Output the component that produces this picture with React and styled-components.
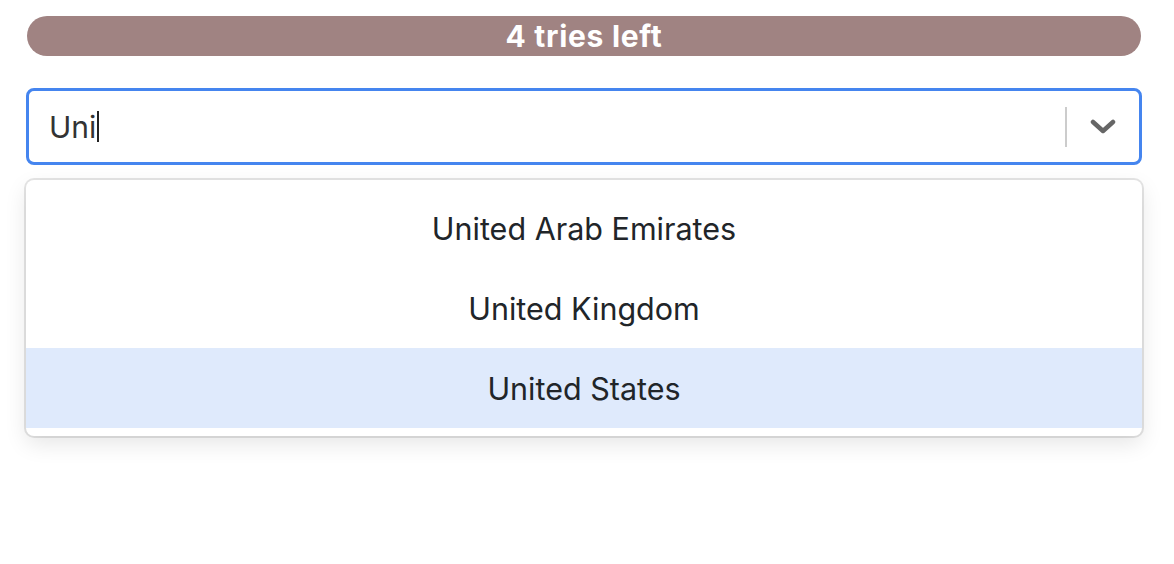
import React from "react";
import styled, { createGlobalStyle } from "styled-components";

const Global = createGlobalStyle`
  html, body { margin: 0; padding: 0; background: #fff; min-height: 100vh; }
  #root { min-height: 100vh; }
  body { font-family: Inter, "Noto Sans", "Liberation Sans", sans-serif; }
`;

const Page = styled.div`
  width: 1116px;
  margin-left: 26px;
  padding-top: 16px;
  display: flex;
  flex-direction: column;
`;

const TriesBar = styled.div`
  margin: 0 1px;
  height: 40px;
  border-radius: 20px;
  background: #a08382;
  color: #fff;
  font-weight: 700;
  font-size: 30px;
  display: flex;
  align-items: center;
  justify-content: center;
  letter-spacing: 0.7px;
`;

const SelectWrap = styled.div`
  margin-top: 32px;
  position: relative;
`;

const Control = styled.div`
  height: 77px;
  box-sizing: border-box;
  border: 3px solid #4585ef;
  border-radius: 8px;
  display: flex;
  align-items: center;
  background: #fff;
`;

const ValueArea = styled.div`
  flex: 1;
  padding-left: 20px;
  display: flex;
  align-items: center;
  font-size: 30px;
  color: #333;
`;

const Caret = styled.span`
  display: inline-block;
  width: 2px;
  height: 31px;
  background: #222;
  margin-left: 1px;
`;

const Indicators = styled.div`
  display: flex;
  align-items: center;
  align-self: stretch;
`;

const Separator = styled.span`
  width: 2px;
  height: 40px;
  background: #ccc;
`;

const Chevron = styled.div`
  width: 72px;
  display: flex;
  align-items: center;
  justify-content: center;
  color: #666;
`;

const Menu = styled.div`
  position: absolute;
  top: 92px;
  left: 0;
  right: 0;
  z-index: 2;
  background: #fff;
  border-radius: 8px;
  box-shadow: 0 0 0 2px rgba(0, 0, 0, 0.1), 0 8px 22px rgba(0, 0, 0, 0.1);
  padding: 8px 0;
`;

const OptionRow = styled.div`
  height: 80px;
  display: flex;
  align-items: center;
  justify-content: center;
  font-size: 30.5px;
  color: #212529;
  background: ${(p) => (p.$focused ? "#dfeafc" : "transparent")};
`;

const options = ["United Arab Emirates", "United Kingdom", "United States"];

export default function App() {
  return (
    <>
      <Global />
      <Page>
        <TriesBar>4 tries left</TriesBar>
        <SelectWrap>
          <Control>
            <ValueArea>
              Uni<Caret />
            </ValueArea>
            <Indicators>
              <Separator />
              <Chevron>
                <svg width="26" height="16" viewBox="0 0 26 16">
                  <path
                    d="M3 3 L13 12 L23 3"
                    fill="none"
                    stroke="currentColor"
                    strokeWidth="4.5"
                    strokeLinecap="round"
                    strokeLinejoin="round"
                  />
                </svg>
              </Chevron>
            </Indicators>
          </Control>
          <Menu>
            {options.map((o, i) => (
              <OptionRow key={o} $focused={i === 2}>
                {o}
              </OptionRow>
            ))}
          </Menu>
        </SelectWrap>
      </Page>
    </>
  );
}
